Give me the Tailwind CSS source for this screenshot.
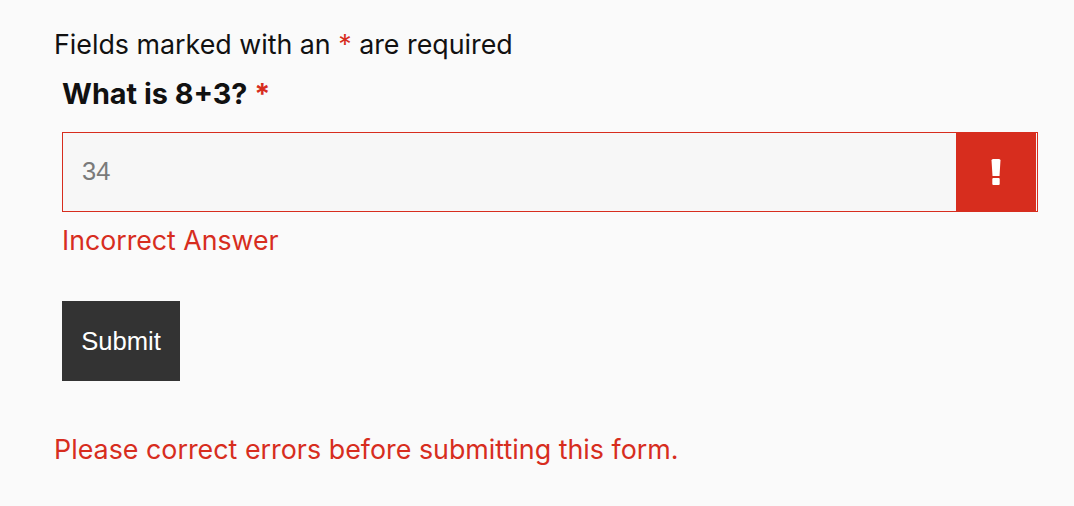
<!DOCTYPE html>
<html lang="en">
<head>
    <meta charset="UTF-8">
    <meta name="viewport" content="width=device-width, initial-scale=1.0">
    <script src="https://cdn.jsdelivr.net/npm/@tailwindcss/browser@4"></script>
    <title>Form</title>
</head>

<body class="bg-[#fafafa] font-['Inter',sans-serif] text-[#111] h-[506px] overflow-hidden">
    <div class="pl-[54px] pr-[36px] pt-[27px]">
        <p class="text-[26.8px] leading-[34px]">Fields marked with an <span class="text-[#d72d1e]">*</span> are required</p>
        <form class="pl-[8px]">
            <label for="answer" class="block mt-[14px] text-[28.8px] leading-[38px] font-bold">What is 8+3? <span class="text-[#d72d1e]">*</span></label>
            <div class="mt-[19px] flex h-[80px] w-[976px] border border-[#d72d1e] bg-[#f7f7f7]">
                <input id="answer" type="text" value="34" class="flex-1 min-w-0 px-[19px] pb-[2px] font-['Liberation_Sans',sans-serif] text-[25.5px] text-[#7a7a7a] bg-transparent outline-none">
                <div class="flex h-full w-[80px] mr-[1px] items-center justify-center bg-[#d72d1e]">
                    <svg width="10" height="26" viewBox="0 0 10 26" fill="#fff"><path d="M0.5 1.5 Q0.5 0 2 0 H8 Q9.5 0 9.5 1.5 L8.5 17 H1.5 Z"/><rect x="1.3" y="19" width="7.4" height="7" rx="1"/></svg>
                </div>
            </div>
            <p class="mt-[11px] text-[26.7px] leading-[34px] text-[#d72d1e]">Incorrect Answer</p>
            <button type="submit" class="block mt-[44px] h-[80px] w-[118px] bg-[#333] font-['Liberation_Sans',sans-serif] text-[25.6px] text-white">Submit</button>
        </form>
        <p class="mt-[51px] text-[26.85px] leading-[34px] text-[#d72d1e]">Please correct errors before submitting this form.</p>
    </div>
</body>

</html>
